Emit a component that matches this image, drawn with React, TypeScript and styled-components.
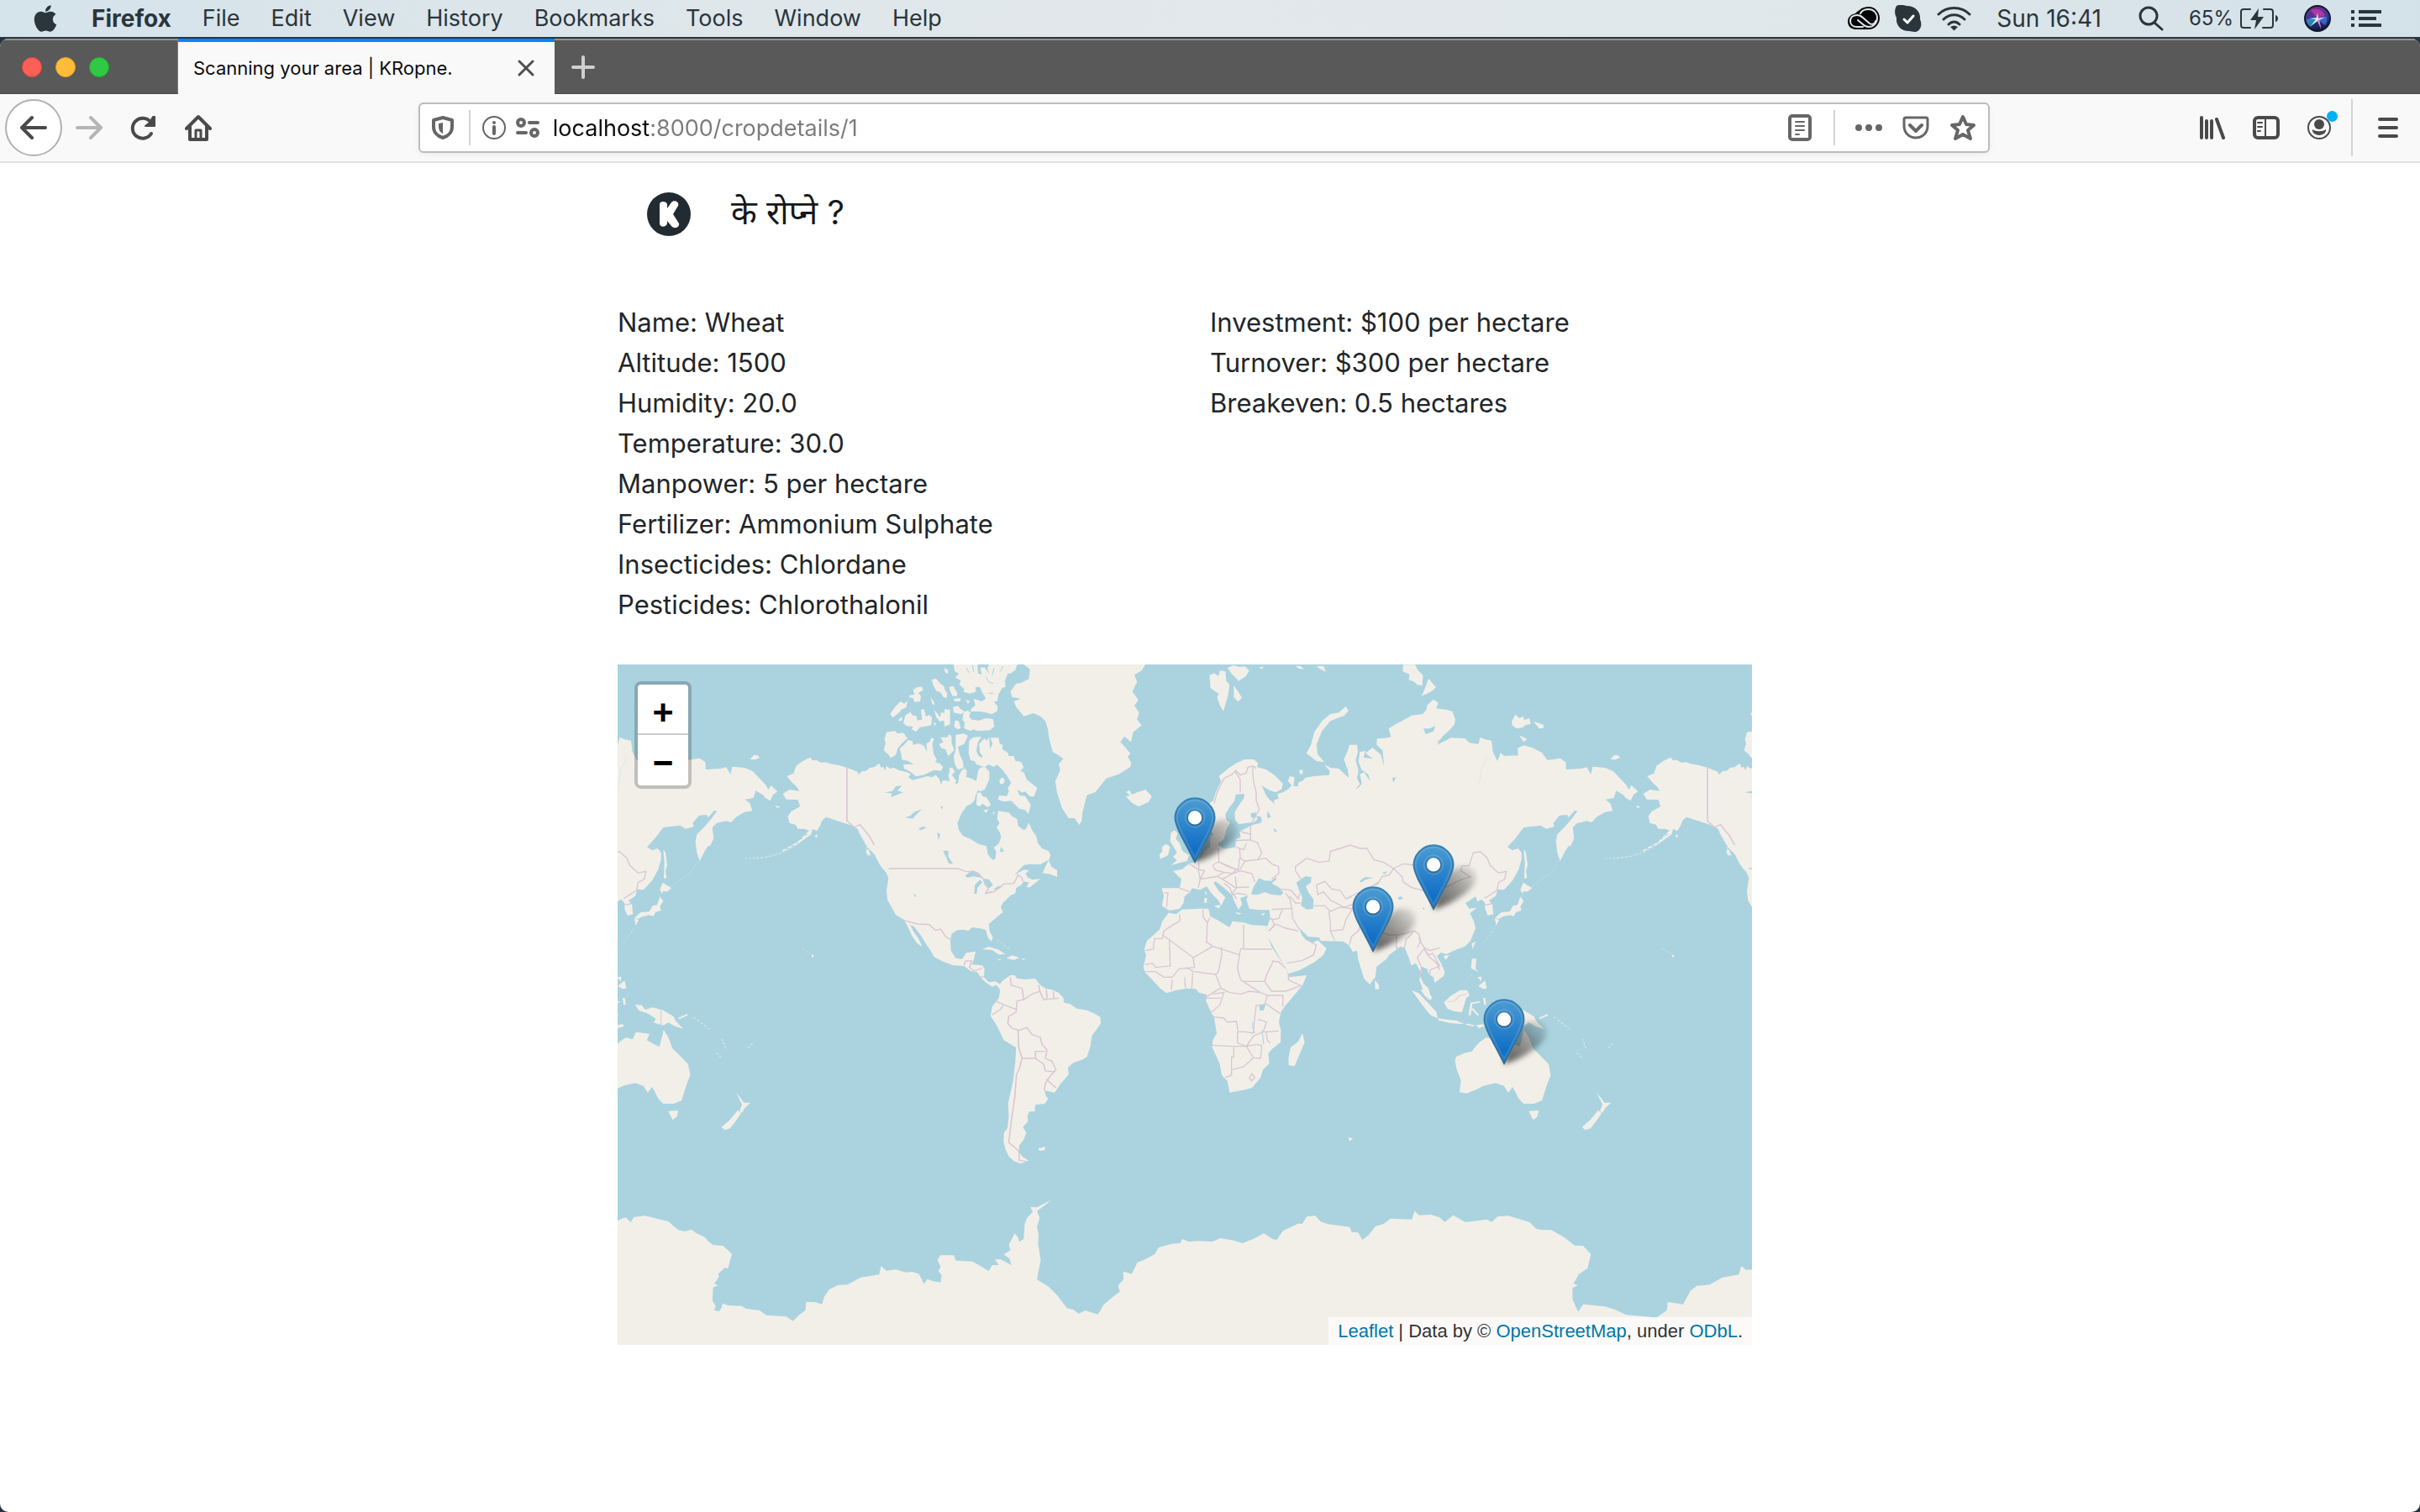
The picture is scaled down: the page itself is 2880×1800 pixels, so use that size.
import React from "react";
import styled, { createGlobalStyle, css } from "styled-components";
import { FaApple } from "react-icons/fa";

const GlobalStyle = createGlobalStyle`
  *, *::before, *::after { box-sizing: border-box; }
  html, body { margin: 0; padding: 0; }
  body {
    background: #26323f;
    color: #212529;
    font-family: Inter, "Noto Sans", "Liberation Sans", sans-serif;
  }
  button, input { font: inherit; color: inherit; margin: 0; }
`;

const Desktop = styled.div`
  display: flex;
  flex-direction: column;
  min-height: 100vh;
`;

/* ---------- macOS menu bar ---------- */

const MenuBar = styled.header`
  display: flex;
  align-items: center;
  justify-content: space-between;
  height: 46px;
  padding: 0 46px 0 36px;
  border-bottom: 2px solid #2b353d;
  background: linear-gradient(90deg, #d5e3eb, #dde6ea 25%, #e3e8ec 50%, #dfe7ea 75%, #d3e1e9);
  color: #2a353c;
  font-size: 27px;
  line-height: 44px;
`;

const Menus = styled.nav`
  display: flex;
  align-items: center;
  gap: 37px;
`;

const Status = styled.div<{ $gap: number }>`
  display: flex;
  align-items: center;
  gap: ${(p) => p.$gap}px;
`;

const BareButton = styled.button`
  display: inline-flex;
  align-items: center;
  justify-content: center;
  padding: 0;
  border: 0;
  background: none;
  line-height: inherit;
`;

const MenuButton = styled(BareButton)<{ $strong?: boolean }>`
  font-size: ${(p) => (p.$strong ? 28 : 27)}px;
  font-weight: ${(p) => (p.$strong ? 700 : 400)};
`;

const Clock = styled.span`
  margin-right: 14px;
  font-size: 28px;
`;

const Battery = styled.span`
  display: flex;
  align-items: center;
  gap: 8px;
  font-size: 24px;
`;

/* ---------- browser window ---------- */

const Window = styled.div`
  display: flex;
  flex: 1;
  flex-direction: column;
  overflow: hidden;
  border-radius: 10px;
  background: #fff;
`;

const TabStrip = styled.div`
  display: flex;
  height: 66px;
  border-top: 2px solid #8f9394;
  border-bottom: 1px solid #474747;
  background: #595959;
`;

const Lights = styled.div`
  display: flex;
  align-items: center;
  gap: 16px;
  width: 212px;
  padding-left: 26px;
  border-right: 1px solid #7a7a7a;
`;

const Light = styled.button<{ $color: string; $edge: string }>`
  width: 24px;
  height: 24px;
  padding: 0;
  border: 1px solid ${(p) => p.$edge};
  border-radius: 50%;
  background: ${(p) => p.$color};
`;

const Tab = styled.div`
  display: flex;
  align-items: center;
  justify-content: space-between;
  width: 448px;
  height: 66px;
  margin-top: -2px;
  padding: 0 24px 0 18px;
  border-top: 4px solid #0a84ff;
  background: #f9f9f9;
  color: #0c0c0d;
  font-size: 22px;
`;

const NewTab = styled(BareButton)`
  width: 68px;
`;

const Toolbar = styled.div`
  display: flex;
  align-items: center;
  height: 82px;
  border-bottom: 2px solid #e0e0e1;
  background: #f9f9f9;
  color: #4a4a4b;
`;

const NavGroup = styled.div`
  display: flex;
  align-items: center;
  gap: 33px;
  width: 268px;
  padding-left: 6px;
`;

const BackButton = styled(BareButton)`
  width: 68px;
  height: 68px;
  margin-right: -17px;
  border: 2px solid #b1b1b1;
  border-radius: 50%;
  background: #fff;
`;

const Spacer = styled.div`
  flex: 1 1 0;
`;

const UrlBar = styled.div`
  display: flex;
  flex: 8 1 0;
  align-items: center;
  height: 60px;
  padding: 0 14px;
  border: 2px solid #bcbcbc;
  border-radius: 6px;
  background: #fff;
  box-shadow: 0 2px 6px rgba(0, 0, 0, 0.06);
  color: #666;
`;

const Divider = styled.span<{ $height: number; $before: number; $after: number }>`
  width: 2px;
  height: ${(p) => p.$height}px;
  margin: 0 ${(p) => p.$after}px 0 ${(p) => p.$before}px;
  background: #d4d4d4;
`;

const IconRow = styled.span<{ $gap: number }>`
  display: flex;
  align-items: center;
  gap: ${(p) => p.$gap}px;
`;

const Address = styled.input`
  flex: 1;
  min-width: 0;
  height: 40px;
  margin-left: 16px;
  padding: 0;
  border: 0;
  outline: 0;
  background: linear-gradient(90deg, #0c0c0d 117px, #7b7b7c 117px);
  background-clip: text;
  -webkit-background-clip: text;
  -webkit-text-fill-color: transparent;
  font-size: 27px;
`;

const ToolGroup = styled.div`
  display: flex;
  align-items: center;
  width: 282px;
  padding-left: 20px;
`;

const Account = styled(BareButton)`
  position: relative;
`;

const Notice = styled.span`
  position: absolute;
  top: -6px;
  right: -8px;
  width: 13px;
  height: 13px;
  border-radius: 50%;
  background: #00b3f4;
`;

/* ---------- web page ---------- */

const Page = styled.main`
  width: 100%;
  max-width: 1410px;
  margin: 0 auto;
`;

const Brand = styled.a`
  display: flex;
  align-items: center;
  gap: 48px;
  width: max-content;
  height: 122px;
  padding-left: 35px;
  color: #16181b;
  text-decoration: none;
`;

const BrandName = styled.span`
  padding-bottom: 4px;
  font-family: Inter, "Noto Sans Devanagari", "Lohit Devanagari", "Noto Sans", sans-serif;
  font-size: 40px;
  line-height: 52px;
`;

const Details = styled.div`
  display: grid;
  grid-template-columns: 1fr 1fr;
  margin-top: 44px;
`;

const FactList = styled.ul`
  margin: 0;
  padding: 0;
  list-style: none;
  font-size: 31px;
  line-height: 48px;
`;

const MapFrame = styled.section`
  position: relative;
  margin: 47px 60px 0 0;
  overflow: hidden;
  background: #aad3df;
  font-family: "Liberation Sans", Arial, sans-serif;
`;

const WorldSvg = styled.svg`
  display: block;
  width: 100%;
  height: auto;
`;

const ZoomControl = styled.div`
  position: absolute;
  top: 20px;
  left: 20px;
  display: flex;
  flex-direction: column;
  width: 68px;
  border: 4px solid rgba(0, 0, 0, 0.2);
  border-radius: 8px;
  background: #fff;
  background-clip: padding-box;
`;

const ZoomButton = styled.button<{ $first?: boolean }>`
  height: 60px;
  padding: 0;
  border: 0;
  background: none;
  color: #000;
  font-family: Inter, sans-serif;
  font-size: 44px;
  font-weight: 600;
  line-height: 60px;
  ${(p) =>
    p.$first &&
    css`
      border-bottom: 2px solid #ccc;
    `}
`;

const Pin = styled.button<{ $x: number; $y: number }>`
  position: absolute;
  left: ${(p) => (p.$x / 1350) * 100}%;
  top: ${(p) => (p.$y / 810) * 100}%;
  width: 50px;
  height: 82px;
  margin: -81px 0 0 -25px;
  padding: 0;
  border: 0;
  background: none;

  svg {
    display: block;
    overflow: visible;
  }
`;

const Attribution = styled.div`
  position: absolute;
  right: 0;
  bottom: 0;
  padding: 0 11px;
  background: rgba(255, 255, 255, 0.7);
  color: #333;
  font-size: 22px;
  line-height: 33px;
  white-space: nowrap;

  a {
    color: #0078a8;
    text-decoration: none;
  }
`;

/* ---------- icons ---------- */

type IconProps = { w?: number; h?: number; box?: string; children: React.ReactNode; sw?: number };

const Icon = ({ w = 32, h = 32, box, children, sw = 4 }: IconProps) => (
  <svg
    width={w}
    height={h}
    viewBox={box ?? `0 0 ${w} ${h}`}
    fill="none"
    stroke="currentColor"
    strokeWidth={sw}
    strokeLinecap="round"
    strokeLinejoin="round"
    aria-hidden="true"
  >
    {children}
  </svg>
);

const CreativeCloudIcon = () => (
  <Icon w={38} h={28} sw={2}>
    <path
      d="M14 4C17 1 21 0 25 0c7 0 13 6 13 13.500S32 27 25 27H10C4 27 0 23 0 18c0-6 4-9 9-10 1-1 3-3 5-4z"
      fill="#060606"
      stroke="none"
    />
    <path
      d="M18 24h-7c-5 0-8-3-8-7 0-5 4-7 8-7 3 0 5 1 7 3l8 7c3 2 7 0 7-3"
      stroke="#dfe7ea"
      strokeWidth="2"
    />
    <path
      d="M15 8c2-4 6-5 10-5 6 0 10 5 10 10 0 7-5 11-10 11-3 0-5-1-7-3l-6-5"
      stroke="#dfe7ea"
      strokeWidth="2"
    />
  </Icon>
);

const SkypeIcon = () => (
  <Icon>
    <path
      d="M2 1C6-1 11 0 14 1c10 0 17 7 16 16 3 6 1 14-6 15-3 0-5-1-7-1C7 31 1 24 2 15-1 10 0 4 2 1z"
      fill="currentColor"
      stroke="none"
    />
    <path d="m11 17 4 4 7-8" stroke="#fff" strokeWidth="3" />
  </Icon>
);

const WifiIcon = () => (
  <Icon w={41} h={30} sw={3}>
    <path d="M2 10c10-10 27-10 37 0M8 16c7-7 18-7 25 0M14 22c4-4 9-4 13 0" />
    <path d="m16 25 4.500 4.500 4.500-4.500c-3-2-6-2-9 0z" fill="currentColor" stroke="none" />
  </Icon>
);

const SearchIcon = () => (
  <Icon w={30} h={30} sw={3}>
    <circle cx="12" cy="12" r="10" />
    <path d="m19 20 9 8" />
  </Icon>
);

const BatteryIcon = () => (
  <Icon w={46} h={26} sw={2}>
    <path d="M12 2H4a3 3 0 0 0-3 3v16a3 3 0 0 0 3 3h8M28 2h8a3 3 0 0 1 3 3v16a3 3 0 0 1-3 3h-9" />
    <path d="M22 1 12 15h7l-2 11 11-15h-7z" fill="currentColor" stroke="none" />
    <path d="M42 9c4 1 4 7 0 8z" fill="currentColor" stroke="none" />
  </Icon>
);

const SiriIcon = () => (
  <svg width="32" height="32" viewBox="0 0 32 32" aria-hidden="true">
    <defs>
      <linearGradient id="siri" x1="0.300" y1="0" x2="0.500" y2="1">
        <stop offset="0" stopColor="#7e2a86" />
        <stop offset="0.500" stopColor="#3a3b9a" />
        <stop offset="1" stopColor="#0c1836" />
      </linearGradient>
    </defs>
    <circle cx="16" cy="16" r="15" fill="url(#siri)" stroke="#10182b" strokeWidth="2" />
    <path d="M8 6c5-3 14-1 17 6l-9 5z" fill="#c53aa4" opacity="0.800" />
    <path d="M3 17c4 0 9-2 13 0l-8 9c-3-2-5-5-5-9z" fill="#2aa7c9" opacity="0.700" />
    <path d="m16 17 11-3c1 4 0 7-2 10z" fill="#3d6fe0" opacity="0.800" />
    <path d="m16 9 1 7 9-2-8 4 2 9-4-8-8 6 6-8-8-1 9-1z" fill="#c9fbff" />
    <path d="m16 18 4 11-2-12z" fill="#ff6bc2" />
  </svg>
);

const ListIcon = () => (
  <Icon w={36} h={22} sw={4}>
    <path d="M9 3h27M9 11h21M9 19h27M0 3h4M0 11h4M0 19h4" strokeLinecap="butt" />
  </Icon>
);

const CloseIcon = () => (
  <Icon w={20} h={20} sw={3}>
    <path d="m2 2 16 16M18 2 2 18" stroke="#4f4f50" />
  </Icon>
);

const PlusIcon = () => (
  <Icon w={28} h={28} sw={4}>
    <path d="M14 2v24M2 14h24" stroke="#d0d0d0" />
  </Icon>
);

const BackIcon = () => (
  <Icon>
    <path d="M2 16h28M14 4 2 16l12 12" />
  </Icon>
);

const ForwardIcon = () => (
  <Icon>
    <path d="M2 16h28M18 4l12 12-12 12" stroke="#b5b5b5" />
  </Icon>
);

const ReloadIcon = () => (
  <Icon>
    <path d="M25 23a12 12 0 1 1-1-14" />
    <path d="M29 3v11H18l5-4 4-7z" fill="currentColor" strokeWidth="2" />
  </Icon>
);

const HomeIcon = () => (
  <Icon>
    <path d="M2 17 16 3l14 14M6 15v15h20V15" />
    <path d="M13 29V19h6v10" strokeWidth="3" />
  </Icon>
);

const ShieldIcon = () => (
  <Icon w={26} h={28} sw={4}>
    <path d="M13 2 2 5v8c0 6 4 11 11 13 7-2 11-7 11-13V5z" />
    <path d="M13 8v13c-4-2-5-5-5-8V9z" fill="currentColor" stroke="none" />
  </Icon>
);

const InfoIcon = () => (
  <Icon w={28} h={28} sw={2}>
    <circle cx="14" cy="14" r="13" />
    <path d="M14 13v8" strokeWidth="4" />
    <circle cx="14" cy="8" r="2" fill="currentColor" stroke="none" />
  </Icon>
);

const PermissionsIcon = () => (
  <Icon w={28} h={26} sw={4}>
    <circle cx="6" cy="7" r="4" />
    <circle cx="22" cy="19" r="4" />
    <path d="M16 7h10M2 19h10" />
  </Icon>
);

const ReaderIcon = () => (
  <Icon w={28} h={32} sw={4}>
    <rect x="2" y="2" width="24" height="28" rx="3" />
    <path d="M9 9h10M9 14h10M9 19h10M9 24h4" strokeWidth="2" />
  </Icon>
);

const DotsIcon = () => (
  <Icon w={32} h={10}>
    <g fill="currentColor" stroke="none">
      <circle cx="4" cy="5" r="4" />
      <circle cx="16" cy="5" r="4" />
      <circle cx="28" cy="5" r="4" />
    </g>
  </Icon>
);

const PocketIcon = () => (
  <Icon w={32} h={28} sw={3}>
    <path d="M4 2h24a2 2 0 0 1 2 2v8c0 8-6 14-14 14S2 20 2 12V4a2 2 0 0 1 2-2z" />
    <path d="m9 11 7 7 7-7" strokeWidth="4" />
  </Icon>
);

const StarIcon = () => (
  <Icon sw={4}>
    <path d="m16 3 4 9 9 1-7 6 3 10-9-5-9 5 3-10-7-6 9-1z" />
  </Icon>
);

const LibraryIcon = () => (
  <Icon w={30} h={28} sw={4}>
    <path d="M2 2v24M8 6v20M14 6v20M20 4l8 22" />
  </Icon>
);

const SidebarIcon = () => (
  <Icon w={32} h={28} sw={4}>
    <rect x="2" y="2" width="28" height="24" rx="4" />
    <path d="M15 2v24M6 8h5M6 13h5M6 18h3" strokeWidth="2" />
  </Icon>
);

const AccountIcon = () => (
  <Icon w={28} h={28} sw={2}>
    <circle cx="14" cy="14" r="13" />
    <circle cx="14" cy="10" r="6" fill="currentColor" stroke="none" />
    <path d="M6 16c4 3 12 3 16 0 1 3-3 7-8 7s-9-4-8-7z" fill="currentColor" stroke="none" />
  </Icon>
);

const BurgerIcon = () => (
  <Icon w={24} h={26} sw={4}>
    <path d="M2 3h20M2 13h20M2 23h20" />
  </Icon>
);

const LogoIcon = () => (
  <svg width="52" height="52" viewBox="0 0 52 52" aria-hidden="true">
    <circle cx="26" cy="26" r="26" fill="#232b32" />
    <path
      d="M15 14c0-4 8-4 9 0v5l5-7c3-4 10-1 8 4l-6 10 7 11c1 5-6 7-9 3l-5-6v3c-1 5-9 5-9 0z"
      fill="#fff"
    />
  </svg>
);

/* ---------- world map ---------- */

const WEST = "matrix(0.39541 0 0 0.33333 -5 -11)";
const ARCTIC = "matrix(0.33333 0 0 0.33333 305 -6)";
const EAST = "matrix(0.33333 0 0 0.33333 565 -11)";
const FAR_EAST = "matrix(0.33333 0 0 0.33333 945 -11)";
const SOUTH = "matrix(0.5102 0 0 0.33333 565 389)";
const SOUTH_WEST = "matrix(0.39541 0 0 0.33333 -5 389)";

const northAmerica =
  "592,365 600,376 610,374 625,384 640,382 652,388 665,390 680,394 703,402 722,410 735,418 738,427 748,415 760,413 772,402 785,400 800,386 806,402 812,398 818,412 822,396 832,404 845,402 860,412 880,416 895,424 888,436 900,446 920,440 945,432 958,436 970,428 980,440 986,462 992,446 1012,450 1008,430 1016,400 1022,410 1020,430 1032,448 1028,462 1038,456 1040,430 1048,412 1056,404 1064,412 1062,435 1078,440 1092,450 1096,425 1100,405 1118,410 1130,418 1126,455 1110,485 1098,480 1090,500 1088,515 1080,528 1062,540 1048,565 1035,600 1040,625 1052,645 1075,657 1100,675 1123,682 1127,710 1134,722 1143,732 1150,725 1152,700 1145,688 1160,672 1167,650 1163,632 1153,615 1162,600 1155,585 1158,556 1190,562 1200,575 1215,585 1218,610 1235,625 1242,620 1250,598 1260,625 1272,645 1278,672 1290,690 1310,700 1316,715 1312,730 1285,747 1250,746 1235,750 1220,768 1208,785 1235,766 1252,768 1240,780 1248,795 1262,802 1285,798 1270,814 1252,830 1243,826 1252,812 1235,808 1228,820 1212,832 1210,850 1195,858 1185,870 1172,885 1166,900 1172,918 1150,940 1130,960 1132,985 1142,1008 1138,1022 1128,1010 1120,980 1100,975 1080,972 1068,984 1050,980 1035,982 1018,995 1014,1020 1016,1055 1030,1082 1050,1085 1062,1063 1090,1058 1085,1085 1078,1105 1110,1108 1117,1120 1115,1150 1130,1168 1150,1165 1165,1176 1165,1195 1152,1178 1140,1184 1120,1168 1105,1150 1095,1132 1075,1128 1055,1110 1020,1107 990,1093 965,1078 955,1055 940,1030 925,1000 905,970 893,963 905,990 918,1012 930,1042 915,1030 900,1005 890,980 875,945 850,928 840,905 825,875 822,840 828,795 820,775 800,745 785,710 768,690 745,645 735,620 710,605 690,598 665,588 650,582 640,578 628,590 622,610 612,628 600,620 595,640 578,655 560,670 540,688 562,662 585,640 590,626 575,620 555,620 548,605 530,600 525,575 535,558 550,548 562,540 555,516 520,515 510,495 530,480 560,485 552,470 538,455 522,432 542,422 550,395 570,378";

const southAmerica =
  "1160,1180 1172,1162 1195,1143 1208,1143 1215,1155 1240,1158 1270,1155 1285,1178 1300,1190 1320,1195 1340,1205 1355,1225 1355,1240 1375,1246 1395,1262 1425,1268 1445,1278 1465,1292 1467,1315 1455,1335 1440,1360 1436,1395 1425,1435 1410,1445 1385,1455 1368,1472 1370,1498 1345,1532 1328,1562 1298,1555 1300,1568 1308,1585 1298,1602 1270,1605 1268,1630 1252,1630 1246,1645 1248,1665 1232,1685 1243,1705 1235,1730 1222,1750 1220,1775 1232,1792 1250,1805 1225,1816 1205,1806 1190,1790 1180,1765 1174,1735 1176,1705 1186,1690 1190,1650 1188,1600 1203,1520 1210,1450 1212,1402 1175,1375 1155,1325 1135,1288 1140,1255 1160,1225 1164,1200";

const greenland =
  "1235,33 1254,50 1250,85 1228,98 1212,102 1195,130 1200,150 1226,155 1205,165 1212,185 1220,196 1235,218 1265,207 1285,218 1300,235 1307,260 1312,300 1322,345 1340,358 1354,370 1340,390 1345,410 1330,450 1335,490 1342,515 1350,545 1370,582 1388,582 1402,606 1410,590 1412,560 1425,500 1450,490 1483,440 1521,425 1555,400 1559,385 1548,362 1556,350 1526,310 1538,290 1558,310 1564,275 1590,250 1576,230 1582,205 1568,180 1580,160 1562,130 1576,95 1568,70 1590,55 1601,33";

const arcticIslands = [
  "45,260 75,255 85,265 105,262 120,282 100,300 85,318 78,342 60,352 52,340 35,325 42,300 38,285",
  "92,318 108,305 122,288 138,292 140,305 160,300 178,308 190,330 187,300 200,295 205,278 215,285 208,300 214,340 225,358 218,366 235,372 247,384 240,398 215,395 200,402 180,412 150,418 132,402 108,390 105,375 142,374 120,362 100,358 98,340",
  "58,195 75,170 95,150 108,158 120,148 115,172 100,178 90,190 68,208",
  "88,215 100,205 102,215 92,222",
  "105,228 112,200 130,188 138,200 152,202 155,218 172,215 168,180 178,176 186,205 196,198 207,207 205,235 180,240 165,242 150,258 135,250 140,240 118,238",
  "140,108 158,98 172,98 175,110 158,120 168,130 165,150 145,152 140,138 126,136 128,128 145,125",
  "207,72 222,68 235,85 250,95 254,110 262,120 260,138 248,135 238,118 222,112 212,92",
  "268,98 285,95 290,108 298,120 296,132 280,130 272,112",
  "285,140 310,138 308,150 288,150",
  "252,30 265,38 264,52 254,46",
  "202,136 214,150 216,164 208,158",
  "215,180 228,195 236,208 240,188 252,192 252,178 272,180 272,232 252,240 250,218 235,222 222,205",
  "212,225 222,228 218,238",
  "282,170 300,166 308,176 325,186 310,196 285,190",
  "290,218 303,220 310,245 300,250 286,240",
  "320,190 335,182 345,190 340,205 350,215 375,218 400,210 425,213 430,240 415,253 370,256 355,250 345,256 322,246 324,225 316,215",
  "285,18 370,18 372,50 385,55 380,30 395,28 412,52 405,30 412,18 512,18 505,38 488,50 478,50 468,75 470,98 458,102 445,125 440,150 428,150 442,168 440,185 420,196 400,190 380,186 345,186 348,175 362,165 356,140 385,150 400,140 388,120 378,98 362,100 365,115 345,122 320,116 322,105 305,90 310,75 290,65 304,52 288,42",
  "328,145 342,148 336,160",
  "232,302 248,296 238,278 262,278 268,268 277,274 278,300 287,325 265,346 256,322 240,316",
  "292,270 320,265 336,272 322,302 300,312 306,338 318,365 320,388 300,394 288,372 285,345 292,325",
  "268,390 280,386 290,402 276,412",
  "340,290 355,278 384,276 372,294 366,325 372,342 384,352 388,345 378,332 376,302 388,288 396,282 402,290 412,278 414,320 424,302 416,280 445,280 450,302 460,305 458,320 480,335 480,345 500,345 505,362 525,366 535,385 524,398 536,404 545,428 565,445 583,458 572,490 558,490 540,472 530,476 512,465 520,485 540,488 560,520 552,552 540,538 520,534 505,520 490,505 465,508 442,500 448,486 475,488 482,470 478,460 490,440 478,420 460,395 440,376 428,384 410,375 395,385 365,374 360,364 345,360 338,335",
  "448,432 458,420 468,432 462,444 450,445",
  "380,386 396,384 412,400 412,428 396,465 375,472 370,430 382,420 375,405",
  "368,478 380,475 390,490 402,492 418,520 405,528 388,515 378,525 366,520",
  "390,540 408,534 402,548",
  "424,545 431,546 428,556",
];

const westIslands = [
  "1310,732 1318,755 1335,768 1336,792 1315,782 1292,778 1300,755",
  "1110,1050 1130,1041 1160,1052 1180,1068 1160,1069 1140,1053",
  "1182,1082 1200,1072 1222,1080 1205,1089",
  "1155,1085 1168,1086 1162,1090",
  "1228,1083 1242,1084 1234,1088",
  "596,1068 605,1074 598,1080",
  "1278,1762 1300,1756 1298,1768 1282,1770",
  "605,645 615,640 612,652",
  "762,690 772,705 768,718 760,705",
  "800,745 835,772 815,768",
];

const westLakes = [
  "816,490 840,485 850,468 868,466 855,484 872,490 850,500 835,508 838,494",
  "878,580 895,572 905,560 930,548 915,565 900,584",
  "918,622 930,612 943,616 925,625",
  "992,698 1008,698 1008,720 1022,745 1010,745 1003,725",
  "1058,788 1080,768 1100,778 1112,796 1085,790 1065,794",
  "1086,852 1088,820 1104,802 1110,812 1096,830 1093,852",
  "1112,798 1130,800 1143,822 1130,832 1116,818",
  "1118,854 1135,842 1142,846",
  "1145,834 1160,824 1168,828 1150,838",
  "985,540 992,540 988,552",
  "974,632 984,640 978,660",
  "902,852 912,858 908,864",
  "1166,684 1176,700 1164,704",
];

const eurasia =
  "345,745 380,735 400,700 420,685 422,650 440,630 455,650 450,678 470,692 510,686 513,658 530,650 525,630 560,612 575,605 605,598 592,585 575,597 545,600 522,604 510,588 508,562 520,540 540,512 543,495 512,497 508,520 488,545 475,568 478,588 492,598 480,618 470,655 458,668 445,662 430,635 405,615 402,570 415,530 432,520 440,490 460,450 452,432 485,405 515,385 545,372 575,372 592,385 588,400 620,408 650,428 680,458 676,478 655,490 632,482 605,466 620,500 632,515 650,530 648,518 665,512 660,495 680,490 700,478 712,465 698,450 705,432 722,436 718,468 735,468 735,455 752,448 760,438 790,432 820,430 845,428 848,415 828,390 850,402 880,405 915,438 912,410 898,372 910,345 918,320 945,320 948,345 940,375 950,410 945,440 955,460 938,482 918,474 945,478 962,460 955,425 970,418 992,450 985,425 962,410 950,380 955,345 975,342 968,365 1002,370 975,350 1000,330 1030,355 1042,398 1036,340 1015,320 1016,298 1045,296 1066,292 1058,262 1085,245 1100,238 1140,215 1180,210 1192,195 1196,178 1218,158 1235,170 1228,190 1265,195 1285,200 1296,230 1292,248 1275,268 1250,290 1230,320 1260,305 1280,295 1330,297 1345,312 1378,318 1385,293 1400,300 1425,305 1430,345 1446,378 1458,348 1470,360 1520,358 1518,332 1540,322 1570,330 1580,335 1605,348 1625,375 1670,368 1690,382 1692,408 1745,405 1765,400 1780,426 1786,398 1830,402 1860,415 1905,462 1915,480 1925,465 1948,487 1932,498 1922,520 1902,508 1895,498 1870,484 1862,510 1832,515 1850,530 1858,556 1830,560 1800,578 1782,598 1765,592 1730,600 1715,615 1720,655 1708,680 1700,682 1688,700 1670,735 1660,705 1655,665 1660,640 1690,610 1715,580 1732,556 1722,555 1700,580 1695,570 1668,572 1645,600 1650,612 1620,620 1600,608 1540,615 1510,655 1482,685 1500,697 1520,690 1532,705 1532,730 1522,765 1500,805 1470,838 1448,836 1440,860 1416,876 1428,890 1432,925 1412,930 1402,905 1402,885 1390,872 1375,880 1368,862 1332,886 1345,905 1372,902 1348,922 1362,950 1368,975 1350,1020 1330,1040 1290,1055 1264,1068 1245,1062 1230,1075 1245,1100 1258,1130 1255,1145 1222,1170 1218,1150 1202,1140 1195,1120 1175,1112 1172,1150 1182,1172 1200,1190 1210,1225 1200,1230 1182,1200 1168,1162 1172,1130 1155,1100 1138,1108 1130,1080 1115,1045 1100,1040 1060,1070 1050,1085 1015,1112 1010,1150 990,1176 970,1155 950,1090 945,1055 930,1060 915,1035 895,1022 815,1020 810,1008 770,1005 738,974 748,1000 760,1015 785,1028 805,1018 836,1048 825,1070 795,1095 740,1125 700,1138 690,1115 665,1075 640,1030 620,995 622,975 635,940 632,910 600,910 580,908 560,905 550,872 556,858 545,862 528,868 535,890 522,908 505,875 500,858 470,830 440,808 432,812 450,840 475,865 460,895 450,876 425,850 408,826 385,838 355,832 350,845 330,860 325,885 312,905 275,912 248,895 255,860 248,832 312,832 318,800 288,770 320,765";

const africa =
  "272,920 300,925 320,908 385,905 415,905 420,932 450,948 490,972 500,950 540,955 570,964 600,965 622,967 622,992 640,1040 665,1080 690,1115 702,1150 765,1143 750,1180 720,1215 690,1250 673,1275 666,1310 673,1340 672,1382 640,1408 628,1422 632,1458 609,1480 600,1510 570,1545 545,1552 490,1562 482,1520 462,1500 455,1460 428,1400 430,1375 444,1350 435,1295 421,1270 406,1235 408,1212 380,1205 370,1192 340,1190 300,1196 265,1207 240,1188 215,1160 190,1135 182,1115 192,1070 185,1052 195,1020 240,980 250,950";

const eastIslands = [
  "292,625 305,635 298,655 312,672 322,700 345,715 338,735 310,742 282,750 302,732 288,720 302,705 292,688 278,665 280,635",
  "262,674 278,684 270,715 242,728 240,712 250,700 248,686",
  "120,488 132,482 142,498 160,490 190,480 212,505 200,525 165,540 142,528 120,505 135,500",
  "418,72 435,64 450,75 456,55 475,58 478,92 490,105 485,140 468,200 455,178 445,150 452,138 422,118",
  "482,45 505,36 525,42 545,40 560,55 548,75 522,92 510,78 500,70",
  "505,108 520,130 534,152 520,166 505,150",
  "905,183 915,198 900,215 850,235 820,270 800,320 805,355 828,382 800,378 764,350 780,322 792,275 820,235 850,210 880,205",
  "1110,34 1152,34 1160,50 1180,72 1178,108 1160,106 1150,95 1130,88 1132,68 1108,58",
  "1200,83 1227,115 1210,130 1175,146 1188,118",
  "725,38 745,40 755,50 738,48",
  "800,40 825,38 835,60 815,50",
  "596,44 612,40 604,50",
  "738,412 750,408 752,422 742,426",
  "400,868 410,866 408,885 400,884",
  "402,842 409,848 405,858",
  "435,895 458,892 452,905",
  "510,918 534,922 520,926",
  "602,924 618,920 610,930",
  "1008,1160 1022,1175 1024,1192 1010,1194",
  "1140,1196 1160,1212 1180,1228 1210,1260 1195,1262 1165,1230",
  "750,1350 758,1382 722,1468 701,1464 700,1440 708,1400 735,1380",
];

const farEastIslands = [
  "358,235 370,212 385,225 398,218 402,232 420,225 425,245 405,250 398,258 375,262 358,250",
  "435,236 470,248 472,260 455,262",
  "385,288 395,290 412,300 400,310",
  "710,372 722,358 735,356 745,366 728,373",
  "400,694 408,705 414,750 408,772 412,795 402,798 404,740",
  "398,812 430,832 412,845 400,842 396,852 388,838",
  "388,862 400,878 388,898 392,912 372,918 365,932 350,928 325,934 310,942 298,938 320,918 350,916 362,895 378,892",
  "296,940 312,945 303,965",
  "214,1030 228,1022 218,1050",
  "113,1075 134,1070 122,1088",
  "215,1084 231,1084 228,1120 240,1132 212,1118",
  "238,1182 262,1162 268,1190 255,1192",
  "235,1150 250,1148 248,1165",
  "800,536 818,542 806,546",
];

const southIslands = [
  "848,235 866,222 885,215 895,195 905,180 919,165 935,172 942,146 974,152 968,175 985,190 997,198 1003,165 1007,138 1018,165 1028,205 1045,230 1064,260 1069,300 1060,335 1049,390 1030,402 1006,402 995,385 984,352 980,342 970,362 960,338 940,328 912,338 895,352 872,365 856,360 860,320 850,280 846,250",
  "1018,428 1041,426 1038,448 1028,460",
  "1176,362 1186,380 1194,398 1210,398 1196,418 1190,434 1184,428 1190,405",
  "1180,425 1188,436 1176,462 1162,490 1150,496 1142,485 1160,462",
  "940,48 956,50 964,66 981,58 1006,68 1030,90 1036,108 1053,134 1033,125 1018,112 1006,122 983,112 989,98 968,78 950,70",
  "820,40 835,18 858,-4 874,-4 880,15 872,25 862,75 845,72 828,62",
  "745,-4 762,8 785,45 803,75 805,97 788,85 765,40",
  "805,97 830,102 850,105 868,118 835,114 808,104",
  "765,-6 780,-2 792,20 790,32 776,18",
  "597,522 608,526 600,536",
];

const antarcticaWest =
  "-20,815 13,820 25,812 38,808 52,826 62,806 95,802 130,812 165,822 180,838 195,852 215,858 235,851 250,865 275,878 285,893 300,906 330,910 345,925 357,940 350,965 345,990 335,988 315,1010 318,1020 303,1045 315,1050 300,1058 298,1105 308,1125 303,1140 318,1143 326,1130 328,1115 345,1122 385,1124 400,1134 440,1140 460,1157 520,1162 540,1178 560,1155 578,1140 580,1110 605,1110 628,1118 635,1090 650,1065 675,1050 705,1048 745,1022 800,1012 805,982 822,998 850,994 880,1004 900,1002 920,1010 935,1046 945,1028 962,1036 985,1040 988,1015 978,998 985,985 975,960 985,943 1025,943 1030,962 1080,965 1105,982 1130,1000 1140,978 1160,978 1148,958 1165,958 1198,978 1192,955 1175,940 1195,925 1190,905 1208,865 1218,880 1222,895 1235,885 1238,830 1245,810 1262,788 1255,770 1275,772 1318,745 1298,765 1275,785 1283,810 1275,840 1280,870 1278,900 1286,960 1278,1010 1275,1030 1310,1055 1335,1085 1365,1132 1385,1138 1400,1152 1420,1140 1460,1155 1475,1120 1500,1095 1525,1072 1520,1050 1535,1030 1535,1002 1560,1010 1600,960 1600,1270 -20,1270";

const antarcticaEast =
  "0,1150 12,1155 30,1120 50,1095 65,1075 60,1052 75,1030 72,1002 92,1010 105,968 120,960 145,940 155,915 185,902 205,900 210,885 225,895 245,892 280,895 298,882 330,890 350,900 375,885 400,865 420,885 430,888 445,855 480,830 490,830 500,805 520,802 532,822 550,832 600,842 605,860 620,862 630,888 645,870 660,840 680,830 695,812 745,815 752,785 762,800 790,798 810,808 822,824 842,800 870,825 920,815 932,824 945,805 970,802 1020,825 1035,848 1045,852 1070,853 1100,878 1125,908 1145,910 1163,940 1155,990 1135,1010 1122,1045 1133,1050 1120,1060 1120,1100 1133,1145 1140,1130 1145,1118 1195,1126 1220,1138 1245,1156 1300,1163 1312,1170 1340,1140 1342,1110 1378,1118 1395,1070 1410,1052 1440,1048 1470,1022 1508,1012 1514,982 1525,995 1545,994 1545,1270 0,1270";

const eastWater = [
  "567,854 575,828 595,796 615,805 640,806 655,792 657,800 640,815 665,828 682,848 672,858 640,855 615,846 590,856",
  "728,812 760,790 782,792 780,812 762,825 772,848 790,872 788,906 765,908 745,895 750,865 738,840",
  "585,575 600,575 606,592 595,598",
  "565,565 585,562 582,582 568,580",
  "625,555 638,578 624,582",
  "648,618 660,628 650,632",
  "955,805 975,792 1002,795 975,802 958,812",
  "1090,868 1100,860 1110,870 1096,874",
  "1182,262 1205,262 1224,252 1218,272 1190,282",
  "1070,440 1084,434 1076,455",
  "1228,310 1260,290 1270,300",
  "1035,776 1055,772 1042,782",
  "1005,818 1022,808 1014,822",
  "595,1248 620,1244 612,1268 598,1270",
  "1178,902 1186,902 1184,910",
];

const westBorders = [
  "703,403 703,592 725,615 742,605 770,645 785,678",
  "828,762 1035,762 1060,772 1090,775 1115,800 1128,835 1120,850 1145,845 1165,828 1175,817 1205,815 1218,785 1230,795 1232,808",
  "875,947 915,960 950,962 970,983 985,978 1000,1005 1015,1015",
  "1055,1108 1060,1092 1078,1092 1072,1115 1085,1128 1110,1118",
  "1105,1148 1116,1150",
  "1195,1150 1197,1178 1230,1190 1235,1230 1215,1235 1212,1275 1190,1290 1187,1315 1200,1332 1220,1340 1245,1330 1260,1355 1285,1365 1290,1390 1305,1410 1300,1440 1320,1450 1332,1480 1310,1510 1300,1530 1297,1555",
  "1235,1230 1260,1210 1283,1200 1280,1178",
  "1283,1200 1295,1230 1340,1225",
  "1303,1195 1305,1228",
  "1325,1200 1325,1224",
  "1150,1235 1175,1248 1212,1265",
  "1140,1285 1165,1265 1175,1248",
  "1218,1340 1220,1400 1230,1440 1222,1475 1213,1500 1208,1580 1198,1660 1190,1740 1220,1770 1222,1805 1245,1808",
  "1230,1440 1270,1440 1270,1415 1300,1415",
  "1270,1440 1295,1460 1300,1485 1328,1488",
  "1303,1515 1332,1545",
];

const eastBorders = [
  "435,530 445,490 470,440 500,425 512,412 528,428 550,420 555,400 575,396 585,405",
  "510,415 528,445 528,490",
  "572,400 575,450 585,490 585,520 596,550 570,598",
  "565,605 565,660 590,670 605,708 590,730 545,735 528,725 526,690",
  "513,662 545,660 565,660",
  "530,630 565,640",
  "513,685 540,695 550,672",
  "450,690 452,738 480,750 520,768 526,725",
  "430,750 450,738 485,755 515,765 500,780 470,775 440,768 430,750",
  "380,740 380,765 400,770 385,800 415,795 445,790 470,775",
  "345,745 378,765 385,800 378,830",
  "310,832 348,845",
  "255,850 270,848 265,900",
  "445,790 465,800 500,780 530,770 570,780 580,810",
  "465,800 495,820 510,830 560,828",
  "470,815 490,830 500,855 520,850 550,855",
  "510,790 515,830 500,850 515,870",
  "590,730 620,725 640,745 665,755 665,780 640,800",
  "545,735 525,768",
  "672,835 710,840 735,870 740,850",
  "690,850 705,870 712,905",
  "705,860 725,885 745,885",
  "640,908 700,905 712,905 715,940 740,980",
  "640,945 665,940 680,905",
  "630,985 655,960 690,975 735,985",
  "630,945 640,940 650,965 630,985",
  "695,1100 750,1090 790,1070 800,1035 765,1015",
  "745,800 725,770 725,755 765,725 810,740 845,735 850,700 885,690 920,678 955,690 980,690 1005,730 1040,740 1075,762 1060,785 1035,790 1020,815 985,830 935,855 910,870",
  "800,820 805,855 825,845 850,875 900,900 930,890",
  "800,820 830,808 855,835 885,840 905,870 925,860",
  "790,895 830,895 850,915 885,900 925,905",
  "845,915 850,960 850,985 865,1018",
  "850,985 895,980 905,945 920,920 930,900",
  "918,1035 925,1005 950,985 965,940",
  "1075,762 1110,745 1150,750",
  "1075,762 1105,790 1110,810 1140,830 1180,840 1240,838 1280,820 1320,800 1350,792 1315,770 1320,752 1345,752 1360,705 1385,702 1410,725 1420,750 1450,778 1478,772 1472,800 1450,812 1445,840 1400,868",
  "1020,985 1060,1000 1100,998 1150,985 1165,995 1172,1020 1160,1045",
  "1085,1000 1085,1045 1110,1045",
  "1115,1045 1120,1015 1145,990",
  "1165,1010 1185,1045 1205,1055 1240,1045",
  "1160,1080 1175,1060 1185,1048 1200,1075 1230,1100 1240,1125",
  "1160,1080 1175,1115 1170,1150",
  "1185,1050 1200,1070 1215,1065 1240,1110 1205,1125 1205,1145",
  "1402,892 1425,888",
  "395,908 395,935 410,955 408,1025 430,1040 525,1070 530,1048 540,1048 540,962",
  "540,1050 642,1050",
  "410,955 420,938",
  "312,925 312,950 285,965 255,985 252,1000 360,1080 430,1040",
  "252,1000 250,1012 222,1012 218,1050 188,1055",
  "275,1015 278,1110 225,1115 215,1100 188,1105",
  "360,1080 365,1115 310,1120 285,1150 255,1150 225,1130 190,1130",
  "460,1042 462,1070 450,1130 440,1140 360,1130 335,1115",
  "525,1070 518,1120 530,1160 600,1205 560,1200 530,1210 490,1205 460,1190 440,1140",
  "645,1095 625,1135 615,1165 540,1165",
  "615,1165 640,1200 690,1200 745,1180 700,1160 700,1140",
  "640,1092 665,1095 690,1118",
  "330,1150 332,1190",
  "285,1160 282,1195",
  "358,1135 355,1190",
  "455,1190 400,1225 460,1225",
  "430,1210 470,1205 455,1250 425,1275",
  "600,1205 625,1215 615,1250 585,1250 580,1290",
  "625,1215 680,1215 680,1255",
  "620,1245 670,1280",
  "430,1292 470,1296 480,1310 515,1308 520,1345 545,1345 575,1350 580,1290",
  "428,1393 500,1397 550,1397 590,1390",
  "518,1345 518,1385 550,1397 575,1360 610,1345 622,1310 590,1300",
  "505,1400 505,1435 497,1435 497,1500 475,1508",
  "500,1480 540,1470 575,1438 550,1397",
  "575,1438 600,1440 605,1395 590,1390",
  "610,1345 625,1345 665,1342",
  "560,1510 570,1495 580,1508 568,1520 560,1510",
  "635,1385 625,1375 620,1345",
];

const Polys = ({ list, fill }: { list: string[]; fill: string }) => (
  <>
    {list.map((points) => (
      <polygon key={points} points={points} fill={fill} />
    ))}
  </>
);

const Borders = ({ list }: { list: string[] }) => (
  <>
    {list.map((points) => (
      <polyline key={points} points={points} />
    ))}
  </>
);

const LAND = "#f2efe9";
const WATER = "#aad3df";

const World = () => (
  <>
    <g transform={WEST}>
      <Polys list={[northAmerica, southAmerica, greenland]} fill={LAND} />
      <Polys list={westIslands} fill={LAND} />
      <Polys list={westLakes} fill={WATER} />
      <g fill="none" stroke={LAND} strokeWidth="3" strokeDasharray="9 5">
        <path d="M540 686l-30 20-40 14-50 8" opacity="0.500" />
        <path d="M740 630l22 50 12 36" />
        <path d="M568 1048l26 20M1155 1015l25 25 14 12" opacity="0.400" />
      </g>
      <g fill="none" stroke="#d9c6d3" strokeWidth="4">
        <Borders list={westBorders} />
      </g>
    </g>
    <g transform={ARCTIC}>
      <Polys list={arcticIslands} fill={LAND} />
      <path
        d="M330 30l10 18M352 20l4 24M400 62l10 18 16 6M430 30l-8 26M462 24l-12 20M410 120l16 2"
        fill="none"
        stroke={WATER}
        strokeWidth="3"
      />
    </g>
    <g transform={EAST}>
      <Polys list={[eurasia, africa]} fill={LAND} />
      <Polys list={eastIslands} fill={LAND} />
      <Polys list={eastWater} fill={WATER} />
      <g fill="none" stroke={WATER} strokeWidth="3">
        <path d="M572 1310q-4 20 8 40M606 1340l6 50" />
        <path d="M1410 365l-20 40-10 60" opacity="0.300" />
      </g>
      <g fill="none" stroke="#d9c6d3" strokeWidth="4">
        <Borders list={eastBorders} />
      </g>
    </g>
    <g transform={FAR_EAST}>
      <Polys list={farEastIslands} fill={LAND} />
      <g fill="none" stroke={LAND} strokeWidth="3" strokeDasharray="8 6">
        <path d="M524 735l-20 35-40 30-36 28M300 960l-20 40-34 36M215 1140l-30 36" opacity="0.400" />
        <path d="M922 628l-40 40-60 34" strokeWidth="5" strokeDasharray="16 5" />
        <path d="M822 702l-50 18-80 6" opacity="0.500" />
      </g>
    </g>
    <g transform={SOUTH}>
      <Polys list={southIslands} fill={LAND} />
      <g fill="none" stroke={LAND} strokeWidth="5">
        <path d="M882 44l22-6M884 46l-4 40M886 62l14 24M872 118l18 6M896 124l16-4M914 24l2 24M900 130l14-8M1042 98l20-14" />
        <path
          d="M1076 92l18 20 20 24M1143 170l10 40M1130 220l14 22M1204 204l10-18"
          strokeWidth="3"
          strokeDasharray="8 5"
          opacity="0.600"
        />
      </g>
      <path d="M1001 68v54" fill="none" stroke="#d9c6d3" strokeWidth="2" />
      <path d="M826 36q20 6 30-20l18-6" fill="none" stroke="#d9c6d3" strokeWidth="2" />
    </g>
  </>
);

const WorldMap = () => (
  <WorldSvg viewBox="0 0 1350 810" role="img" aria-label="World map">
    <defs>
      <g id="world">
        <World />
      </g>
    </defs>
    <rect width="1350" height="810" fill={WATER} />
    <use href="#world" x="-1024" />
    <use href="#world" />
    <use href="#world" x="1024" />
    <polygon points={antarcticaWest} fill={LAND} transform={SOUTH_WEST} />
    <polygon points={antarcticaEast} fill={LAND} transform={SOUTH} />
  </WorldSvg>
);

const PinDrawing = () => (
  <svg width="50" height="82" viewBox="403.700 501.870 25.590 41.960" aria-hidden="true">
    <defs>
      <linearGradient id="pinFill" x1="0" y1="1" x2="0" y2="0">
        <stop offset="0.200" stopColor="#126fc6" />
        <stop offset="1" stopColor="#4c9cd1" />
      </linearGradient>
      <linearGradient id="pinEdge" x1="0" y1="1" x2="0" y2="0">
        <stop offset="0" stopColor="#2e6c97" />
        <stop offset="1" stopColor="#3883b7" />
      </linearGradient>
      <linearGradient id="pinShade" x1="0" y1="1" x2="1" y2="0">
        <stop offset="0" stopColor="#000" stopOpacity="0.650" />
        <stop offset="0.550" stopColor="#000" stopOpacity="0.350" />
        <stop offset="1" stopColor="#000" stopOpacity="0.040" />
      </linearGradient>
      <filter id="soft" x="-50%" y="-50%" width="200%" height="200%">
        <feGaussianBlur stdDeviation="1.500" />
      </filter>
    </defs>
    <path
      d="M416.500 542.500C419 533 422 518 434 516.500C444 516 445 525 438 531C431 537 423 541 416.500 542.500z"
      fill="url(#pinShade)"
      filter="url(#soft)"
    />
    <path
      d="M416.544 503.612C409.971 503.612 404.500 509.303 404.500 515.478C404.500 518.256 406.064 521.786 407.194 524.224L416.500 542.096L425.762 524.224C426.892 521.786 428.500 518.433 428.500 515.478C428.500 509.303 423.117 503.612 416.544 503.612Z"
      fill="url(#pinFill)"
      stroke="url(#pinEdge)"
      strokeWidth="1.100"
    />
    <path
      d="M416.544 504.706C410.535 504.706 405.603 509.952 405.603 515.478C405.603 517.955 407.093 521.367 408.188 523.729L416.500 539.690L424.768 523.729C425.860 521.372 427.393 518.137 427.393 515.478C427.393 509.952 422.546 504.706 416.544 504.706Z"
      fill="none"
      stroke="#fff"
      strokeOpacity="0.120"
      strokeWidth="1.100"
    />
    <circle cx="416.500" cy="515.400" r="4.700" fill="#fff" stroke="url(#pinEdge)" strokeWidth="1.100" />
    <circle cx="416.500" cy="515.400" r="5.700" fill="none" stroke="#fff" strokeOpacity="0.120" strokeWidth="1.100" />
  </svg>
);

/* ---------- data ---------- */

const menus = ["File", "Edit", "View", "History", "Bookmarks", "Tools", "Window", "Help"];

// The joiner keeps the half form of "प" instead of the stacked conjunct.
const brandName = "के रोप्\u200dने ?";

const cropFacts = [
  "Name: Wheat",
  "Altitude: 1500",
  "Humidity: 20.0",
  "Temperature: 30.0",
  "Manpower: 5 per hectare",
  "Fertilizer: Ammonium Sulphate",
  "Insecticides: Chlordane",
  "Pesticides: Chlorothalonil",
];

const costFacts = [
  "Investment: $100 per hectare",
  "Turnover: $300 per hectare",
  "Breakeven: 0.5 hectares",
];

const pins = [
  { name: "Europe", x: 687, y: 237 },
  { name: "China", x: 971, y: 293 },
  { name: "India", x: 899, y: 343 },
  { name: "Australia", x: 1055, y: 477 },
];

const App = () => (
  <Desktop>
    <GlobalStyle />
    <MenuBar>
      <Menus>
        <BareButton aria-label="Apple menu">
          <FaApple size={36} />
        </BareButton>
        <MenuButton $strong>Firefox</MenuButton>
        {menus.map((m) => (
          <MenuButton key={m}>{m}</MenuButton>
        ))}
      </Menus>
      <Status $gap={30}>
        <Status $gap={18}>
          <CreativeCloudIcon />
          <SkypeIcon />
          <WifiIcon />
        </Status>
        <Clock>Sun 16:41</Clock>
        <BareButton aria-label="Spotlight">
          <SearchIcon />
        </BareButton>
        <Battery>
          65%
          <BatteryIcon />
        </Battery>
        <Status $gap={24}>
          <SiriIcon />
          <ListIcon />
        </Status>
      </Status>
    </MenuBar>
    <Window>
      <TabStrip>
        <Lights>
          <Light $color="#ff5f57" $edge="#e2463f" aria-label="Close window" />
          <Light $color="#febc38" $edge="#dfa023" aria-label="Minimise window" />
          <Light $color="#30c945" $edge="#1dad2b" aria-label="Zoom window" />
        </Lights>
        <Tab>
          <span>Scanning your area | KRopne.</span>
          <BareButton aria-label="Close tab">
            <CloseIcon />
          </BareButton>
        </Tab>
        <NewTab aria-label="New tab">
          <PlusIcon />
        </NewTab>
      </TabStrip>
      <Toolbar>
        <NavGroup>
          <BackButton aria-label="Back">
            <BackIcon />
          </BackButton>
          <BareButton aria-label="Forward">
            <ForwardIcon />
          </BareButton>
          <BareButton aria-label="Reload">
            <ReloadIcon />
          </BareButton>
          <BareButton aria-label="Home">
            <HomeIcon />
          </BareButton>
        </NavGroup>
        <Spacer />
        <UrlBar>
          <ShieldIcon />
          <Divider $height={42} $before={18} $after={14} />
          <IconRow $gap={12}>
            <InfoIcon />
            <PermissionsIcon />
          </IconRow>
          <Address aria-label="Address" defaultValue="localhost:8000/cropdetails/1" />
          <ReaderIcon />
          <Divider $height={42} $before={26} $after={24} />
          <IconRow $gap={24}>
            <DotsIcon />
            <PocketIcon />
            <StarIcon />
          </IconRow>
        </UrlBar>
        <Spacer />
        <ToolGroup>
          <IconRow $gap={33}>
            <LibraryIcon />
            <SidebarIcon />
            <Account aria-label="Account">
              <AccountIcon />
              <Notice />
            </Account>
          </IconRow>
          <Divider $height={68} $before={24} $after={30} />
          <BareButton aria-label="Open menu">
            <BurgerIcon />
          </BareButton>
        </ToolGroup>
      </Toolbar>
      <Page>
        <Brand href="#">
          <LogoIcon />
          <BrandName lang="ne">{brandName}</BrandName>
        </Brand>
        <Details>
          <FactList>
            {cropFacts.map((f) => (
              <li key={f}>{f}</li>
            ))}
          </FactList>
          <FactList>
            {costFacts.map((f) => (
              <li key={f}>{f}</li>
            ))}
          </FactList>
        </Details>
        <MapFrame>
          <WorldMap />
          {pins.map((p) => (
            <Pin key={p.name} $x={p.x} $y={p.y} aria-label={p.name}>
              <PinDrawing />
            </Pin>
          ))}
          <ZoomControl>
            <ZoomButton $first aria-label="Zoom in">
              +
            </ZoomButton>
            <ZoomButton aria-label="Zoom out">−</ZoomButton>
          </ZoomControl>
          <Attribution>
            <a href="#leaflet">Leaflet</a> | Data by © <a href="#osm">OpenStreetMap</a>, under{" "}
            <a href="#odbl">ODbL</a>.
          </Attribution>
        </MapFrame>
      </Page>
    </Window>
  </Desktop>
);

export default App;
